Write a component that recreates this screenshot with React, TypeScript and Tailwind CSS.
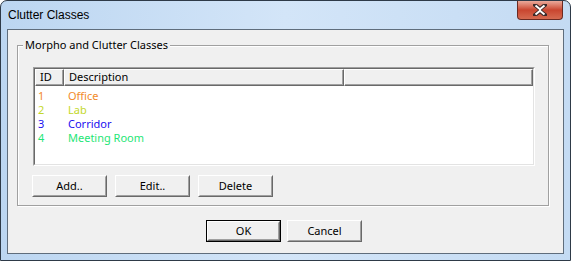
import React from "react";

const font = { fontFamily: '"Liberation Sans", Arial, sans-serif' };
const body = { fontFamily: '"Noto Sans", "Liberation Sans", Arial, sans-serif' };

function Btn({ label, def = false }: { label: string; def?: boolean }) {
  return (
    <div
      className={
        "w-[75px] h-[22px] bg-[#f0f0f0] " +
        (def ? "border border-black" : "")
      }
    >
      <div className="w-full h-full border border-t-white border-l-white border-r-[#696969] border-b-[#696969]">
        <div className="w-full h-full flex items-center justify-center border border-t-[#f0f0f0] border-l-[#f0f0f0] border-r-[#a0a0a0] border-b-[#a0a0a0] text-[11px] leading-[14px] text-black">
          {label}
        </div>
      </div>
    </div>
  );
}

function HeadCell({ w, label }: { w?: string; label: string }) {
  return (
    <div
      className={
        (w ?? "flex-1") +
        " h-full border border-t-white border-l-white border-r-[#696969] border-b-[#696969]"
      }
    >
      <div className="w-full h-full border-b border-r border-[#a0a0a0] bg-[#f0f0f0] flex items-center pl-[4px] text-[11px] leading-[14px] text-black">
        {label}
      </div>
    </div>
  );
}

const rows = [
  { id: "1", d: "Office", c: "text-[#f28a2a]" },
  { id: "2", d: "Lab", c: "text-[#c3d82a]" },
  { id: "3", d: "Corridor", c: "text-[#1a0ff0]" },
  { id: "4", d: "Meeting Room", c: "text-[#1ee676]" },
];

export default function App() {
  return (
    <div style={font} className="w-[571px] h-[261px] bg-white">
      <div className="relative w-[571px] h-[261px] rounded-t-[7px] border border-[#2e3a48] bg-gradient-to-r from-[#bcd6f1] via-[#d3e5f8] to-[#c4dbf3] flex flex-col px-[6px] pb-[6px]">
        <div className="h-[28px] flex items-center pl-[1px] text-[12px] text-black">
          Clutter Classes
        </div>
        <div className="absolute right-[7px] top-0 w-[46px] h-[19px] rounded-b-[4px] border border-t-0 border-[#6b2a22] bg-gradient-to-b from-[#e9a99b] via-[#c9452f] to-[#d56a50] flex items-center justify-center">
          <svg width="14" height="12" viewBox="0 0 14 12">
            <path
              d="M2 1 L7 5 L12 1 M2 11 L7 7 L12 11"
              stroke="#3a2a2a"
              strokeWidth="4"
              fill="none"
              strokeLinecap="square"
            />
            <path
              d="M2.5 1.5 L7 5.2 L11.5 1.5 M2.5 10.5 L7 6.8 L11.5 10.5 M7 5.2 L7 6.8"
              stroke="#ffffff"
              strokeWidth="2"
              fill="none"
            />
          </svg>
        </div>
        <div style={body} className="flex-1 border border-[#5f6d7c] bg-[#f0f0f0] flex flex-col pt-[15px] px-[9px]">
          {/* group box */}
          <div className="relative w-[532px] h-[161px] border border-[#a0a0a0] shadow-[inset_1px_1px_0_#ffffff,1px_1px_0_#ffffff] pt-[21px] pl-[15px]">
            <div className="absolute left-[5px] top-[-8px] bg-[#f0f0f0] px-[2px] text-[11px] leading-[14px] text-black">
              Morpho and Clutter Classes
            </div>
            {/* list view */}
            <div className="w-[502px] h-[99px] border border-t-[#a0a0a0] border-l-[#a0a0a0] border-r-white border-b-white">
              <div className="w-full h-full border border-t-[#696969] border-l-[#696969] border-r-[#e3e3e3] border-b-[#e3e3e3] bg-white flex flex-col">
                <div className="h-[17px] flex">
                  <HeadCell w="w-[29px]" label="ID" />
                  <HeadCell w="w-[280px]" label="Description" />
                  <HeadCell label="" />
                </div>
                <div className="pt-[3px] flex flex-col">
                  {rows.map((r) => (
                    <div key={r.id} className={"h-[14px] flex text-[11px] leading-[14px] " + r.c}>
                      <div className="w-[33px] pl-[3px]">{r.id}</div>
                      <div>{r.d}</div>
                    </div>
                  ))}
                </div>
              </div>
            </div>
            <div className="flex gap-[8px] mt-[9px] -ml-[1px]">
              <Btn label="Add.." />
              <Btn label="Edit.." />
              <Btn label="Delete" />
            </div>
          </div>
          <div className="flex justify-center gap-[6px] mt-[14px] pr-[3px]">
            <Btn label="OK" def />
            <Btn label="Cancel" />
          </div>
        </div>
      </div>
    </div>
  );
}
